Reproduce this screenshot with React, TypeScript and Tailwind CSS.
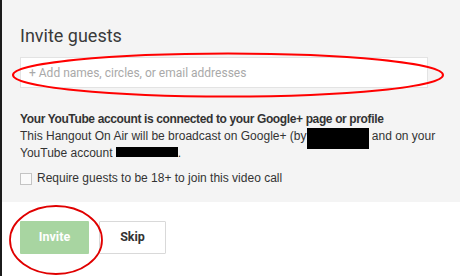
import React from "react";

function Redact({ w, top, h }: { w: number; top: number; h: number }) {
  return (
    <span className="relative inline-block align-baseline" style={{ width: w, height: 1 }}>
      <span className="absolute left-0 bg-black" style={{ width: w, top, height: h }} />
    </span>
  );
}

export default function App() {
  return (
    <div className="relative w-[460px] h-[276px] overflow-hidden bg-white flex" style={{ fontFamily: "Roboto, 'Liberation Sans', sans-serif" }}>
      <div className="w-[2px] h-full bg-[#1b1b1b]" />
      <div className="flex-1 flex flex-col">
        <div className="h-[202px] bg-[#f4f4f4] pl-[18px] pt-[24px]">
          <h1 className="text-[18px] leading-[24px] text-[#3a3a3a] font-normal">Invite guests</h1>
          <div className="mt-[9px] w-[408px] h-[31px] bg-white border border-[#e3e3e3] flex items-center pl-[8px]">
            <span className="text-[12px] text-[#a9a9a9]">+ Add names, circles, or email addresses</span>
          </div>
          <div className="mt-[23px] text-[12px] leading-[17px] text-[#333]" style={{ fontFamily: "'Liberation Sans', Arial, sans-serif" }}>
            <div className="font-bold tracking-[-0.37px]">Your YouTube account is connected to your Google+ page or profile</div>
            <div>
              This Hangout On Air will be broadcast on Google+ (by<Redact w={62} top={-11} h={21} /> and on your
            </div>
            <div>
              YouTube account <Redact w={62} top={-9} h={10} />.
            </div>
          </div>
          <label className="mt-[8px] flex items-center gap-[5px] text-[12px] leading-[17px] text-[#333]" style={{ fontFamily: "'Liberation Sans', Arial, sans-serif" }}>
            <span className="w-[12px] h-[12px] border border-[#c4c4c4] bg-[#fafafa]" />
            <span>Require guests to be 18+ to join this video call</span>
          </label>
        </div>
        <div className="pl-[18px] pt-[19px] flex gap-[10px]">
          <button className="w-[69px] h-[33px] bg-[#a8d5a1] text-white text-[12.5px] font-bold rounded-[1px]">Invite</button>
          <button className="w-[67px] h-[33px] bg-white border border-[#d9d9d9] text-[#333] text-[12.5px] font-bold rounded-[1px]">Skip</button>
        </div>
      </div>
      <svg className="absolute inset-0 pointer-events-none" width="460" height="276">
        <ellipse cx="228" cy="75" rx="215" ry="21.5" fill="none" stroke="#ff0000" strokeWidth="2" />
        <ellipse cx="56" cy="240" rx="46" ry="34" fill="none" stroke="#e00000" strokeWidth="1.8" />
      </svg>
    </div>
  );
}
